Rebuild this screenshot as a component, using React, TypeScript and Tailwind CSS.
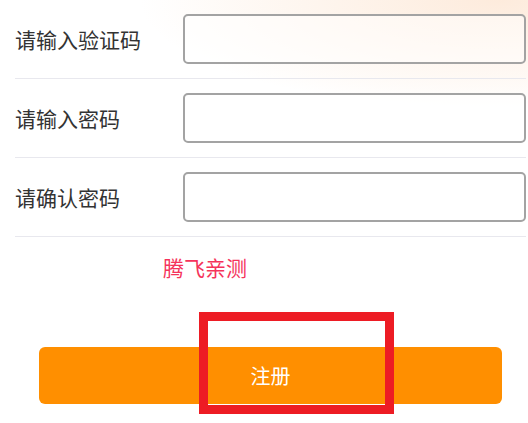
import React from "react";

const rows = ["请输入验证码", "请输入密码", "请确认密码"];

export default function App() {
  return (
    <div
      className="relative w-[528px] h-[423px] overflow-hidden bg-white"
      style={{ fontFamily: '"Noto Sans CJK SC", "Noto Sans", sans-serif' }}
    >
      {/* faint peach glow, top right */}
      <div className="absolute inset-0 bg-[radial-gradient(ellipse_360px_110px_at_500px_0px,#fdebdc,rgba(255,255,255,0)_100%)]" />

      <div className="relative pl-[15px] pr-[2px]">
        {rows.map((label) => (
          <div key={label} className="flex items-center h-[79px] border-b border-[#e8e8ee]">
            <span className="w-[168px] text-[21px] leading-none text-[#333]">{label}</span>
            <input
              type="password"
              className="flex-1 h-[50px] rounded-[5px] border-2 border-[#a3a3a3] bg-white/50 outline-none"
            />
          </div>
        ))}

        <p className="mt-[18px] pl-[148px] text-[21px] leading-[24px] text-[#f5335a]">腾飞亲测</p>
      </div>

      <div className="relative pl-[39px] pr-[26px] mt-[68px]">
        <button className="w-full h-[57px] rounded-[6px] bg-[#ff8f00] text-white text-[20px]">注册</button>
      </div>

      {/* annotation box */}
      <div className="absolute left-[199px] top-[312px] w-[195px] h-[102px] border-[9px] border-[#ed1c24]" />
    </div>
  );
}
